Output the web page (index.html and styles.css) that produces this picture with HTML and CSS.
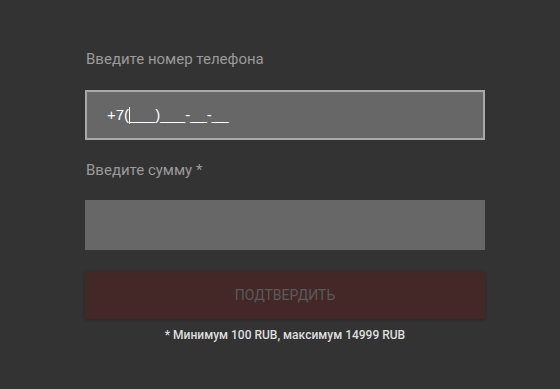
FILE: index.html
```html
<!DOCTYPE html>
<html lang="ru">
<head>
<meta charset="utf-8">
<link rel="stylesheet" href="styles.css">
</head>
<body>
<form class="form">
  <label class="label">Введите номер телефона</label>
  <div class="input input--phone"><span class="mask">+7(<span class="caret"></span>___)___-__-__</span></div>
  <label class="label label--sum">Введите сумму *</label>
  <div class="input input--sum"></div>
  <button type="button" class="submit">ПОДТВЕРДИТЬ</button>
  <p class="note">* Минимум 100 RUB, максимум 14999 RUB</p>
</form>
</body>
</html>
```
FILE: styles.css
```css
html, body {
  margin: 0;
  padding: 0;
  background: #333333;
  font-family: Roboto, "Liberation Sans", sans-serif;
}
.form {
  width: 400px;
  margin: 0 0 0 85px;
  padding-top: 50px;
  display: flex;
  flex-direction: column;
}
.label {
  color: #9a9a9a;
  font-size: 15px;
  line-height: 18px;
  padding-left: 1px;
}
.input {
  box-sizing: border-box;
  height: 50px;
  background: #676767;
  margin-top: 22px;
}
.input--phone {
  border: 2px solid #a9a9a9;
  color: #ffffff;
  font-family: "Liberation Sans", Arial, sans-serif;
  font-size: 15px;
  padding-left: 20px;
  display: flex;
  align-items: center;
}
.mask {
  line-height: 18px;
}
.caret {
  display: inline-block;
  width: 0;
  height: 17px;
  border-left: 1px solid #ffffff;
  vertical-align: -4px;
}
.label--sum {
  margin-top: 21px;
}
.input--sum {
  margin-top: 21px;
}
.submit {
  margin-top: 21px;
  height: 48px;
  border: none;
  background: #442828;
  box-shadow: 0 1px 3px rgba(0,0,0,0.25);
  color: #5a5a5a;
  font-family: Roboto, "Liberation Sans", sans-serif;
  font-size: 14px;
  padding: 0;
}
.note {
  margin: 9px 0 0;
  text-align: center;
  color: #dedede;
  font-size: 12px;
  font-weight: 500;
}
```
